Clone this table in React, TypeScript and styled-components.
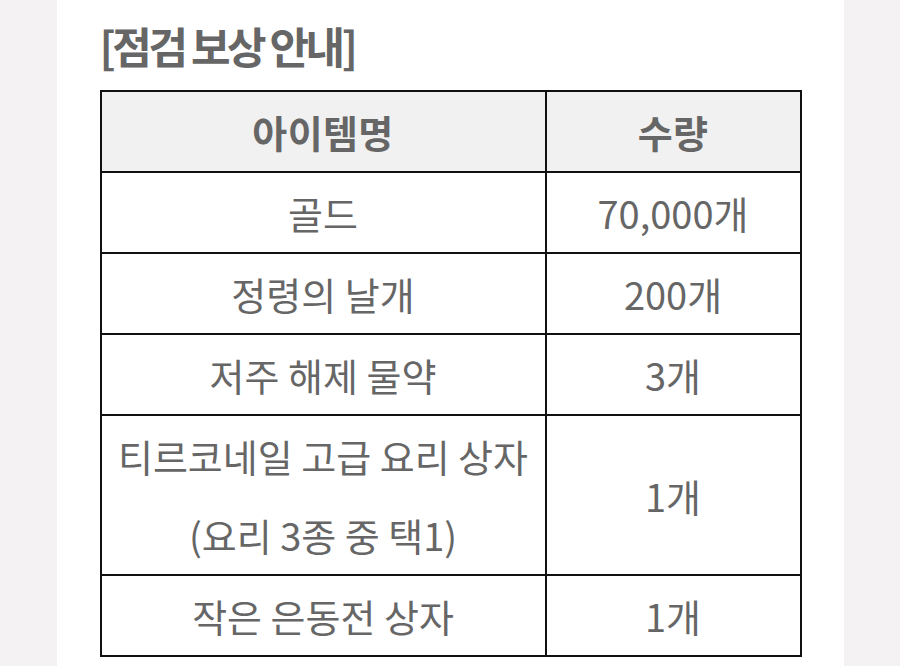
import React from "react";
import styled, { createGlobalStyle } from "styled-components";

const GlobalStyle = createGlobalStyle`
  html, body {
    margin: 0;
    padding: 0;
    background: #f4f2f3;
  }
  body {
    font-family: "Noto Sans CJK KR", "Noto Sans", sans-serif;
  }
`;

const Page = styled.div`
  width: 787px;
  min-height: 666px;
  margin: 0 auto;
  background: #ffffff;
  padding: 20px 43px 0;
  box-sizing: border-box;
`;

const Title = styled.h2`
  margin: 0 0 20px;
  font-size: 43px;
  line-height: 50px;
  font-weight: 700;
  color: #666666;
  letter-spacing: -0.08em;
`;

const Table = styled.table`
  width: 702px;
  border-collapse: collapse;
  table-layout: fixed;
  border: 2px solid #111111;
`;

const Cell = styled.td<{ $head?: boolean }>`
  border: 2px solid #111111;
  padding: 0;
  text-align: center;
  vertical-align: middle;
  font-size: 38px;
  line-height: 79px;
  font-weight: ${(p) => (p.$head ? 700 : 400)};
  color: #666666;
  letter-spacing: ${(p) => (p.$head ? "0.01em" : "0")};
  background: ${(p) => (p.$head ? "#f1f1f1" : "#ffffff")};
`;

const rows: { name: React.ReactNode; qty: string }[] = [
  { name: "골드", qty: "70,000개" },
  { name: "정령의 날개", qty: "200개" },
  { name: "저주 해제 물약", qty: "3개" },
  {
    name: (
      <>
        티르코네일 고급 요리 상자
        <br />
        (요리 3종 중 택1)
      </>
    ),
    qty: "1개",
  },
  { name: "작은 은동전 상자", qty: "1개" },
];

export default function App() {
  return (
    <>
      <GlobalStyle />
      <Page>
        <Title>[점검 보상 안내]</Title>
        <Table>
          <colgroup>
            <col style={{ width: "445px" }} />
            <col />
          </colgroup>
          <thead>
            <tr>
              <Cell as="th" $head>
                아이템명
              </Cell>
              <Cell as="th" $head>
                수량
              </Cell>
            </tr>
          </thead>
          <tbody>
            {rows.map((r, i) => (
              <tr key={i}>
                <Cell>{r.name}</Cell>
                <Cell>{r.qty}</Cell>
              </tr>
            ))}
          </tbody>
        </Table>
      </Page>
    </>
  );
}
